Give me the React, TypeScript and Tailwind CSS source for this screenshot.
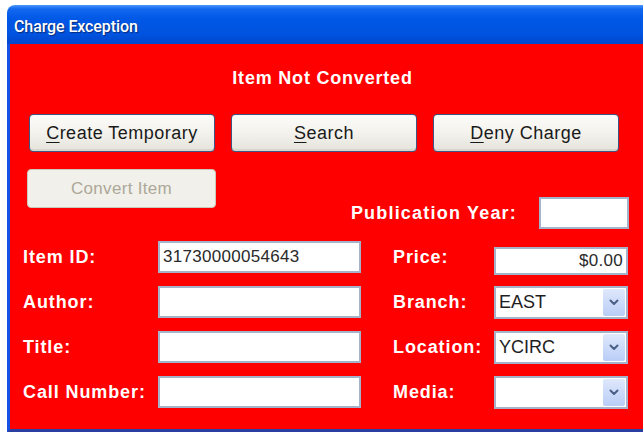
import type { ReactNode } from "react";

const sans = "font-['Liberation_Sans',Arial,sans-serif]";

function Chevron() {
  return (
    <svg width="10" height="7" viewBox="0 0 10 7" fill="none">
      <path d="M1.5 1.5 L5 5 L8.5 1.5" stroke="#4a5f86" strokeWidth="2" strokeLinecap="round" strokeLinejoin="round" />
    </svg>
  );
}

function XpButton({ children, className = "" }: { children: ReactNode; className?: string }) {
  return (
    <button
      className={`h-[38px] rounded-[4px] border border-[#3d5684] bg-gradient-to-b from-[#fcfcfa] via-[#f3f2ec] to-[#e4e3dc] text-[18px] tracking-[0.5px] text-[#1a1a1a] shadow-[inset_0_-2px_0_#d8d6cc] ${className}`}
    >
      {children}
    </button>
  );
}

function Label({ children, className = "" }: { children: ReactNode; className?: string }) {
  return <span className={`text-[18px] font-bold tracking-[0.9px] text-white ${className}`}>{children}</span>;
}

function TextBox({ value = "", align = "left", className = "" }: { value?: string; align?: "left" | "right"; className?: string }) {
  return (
    <div
      className={`flex items-center border-2 border-[#a4b3cb] bg-white px-[3px] text-[17px] tracking-[0.3px] text-[#2a2a2a] ${
        align === "right" ? "justify-end" : "justify-start"
      } ${className}`}
    >
      {value}
    </div>
  );
}

function Combo({ value = "" }: { value?: string }) {
  return (
    <div className="flex h-[33px] w-[134px] items-center border-2 border-[#a4b3cb] bg-white pl-[3px] pr-[1px]">
      <span className="flex-1 text-[18px] text-[#1e1e1e]">{value}</span>
      <span className="flex h-[27px] w-[22px] items-center justify-center rounded-[2px] bg-gradient-to-b from-[#dfe8fc] to-[#b9cdf6]">
        <Chevron />
      </span>
    </div>
  );
}

function FieldRow({ label, children, labelWidth }: { label: string; children: ReactNode; labelWidth: string }) {
  return (
    <div className="flex h-[32px] items-start">
      <div className={`flex h-[32px] items-center ${labelWidth}`}>
        <Label>{label}</Label>
      </div>
      {children}
    </div>
  );
}

export default function App() {
  return (
    <div className={`flex h-[432px] w-[643px] overflow-hidden bg-white pl-[7px] pt-[5px] ${sans}`}>
      <div className="flex flex-1 flex-col overflow-hidden rounded-tl-[8px]">
        {/* title bar */}
        <div className="flex h-[39px] items-center bg-[linear-gradient(180deg,#4a97fb_0%,#1468ef_10%,#0058e6_35%,#0053df_75%,#0046cc_100%)] pl-[7px] pt-[4px]">
          <span className="font-['Roboto',sans-serif] text-[16px] font-medium tracking-[-0.1px] text-white [text-shadow:1px_1px_1px_#0a2a7a]">
            Charge Exception
          </span>
        </div>

        {/* window body */}
        <div className="flex flex-1 flex-col border-b-[3px] border-l-[3px] border-b-[#2b3fa3] border-l-[#1551e2] bg-[#ff0000]">
          <div className="flex justify-center pr-[8px] pt-[23px]">
            <span className="text-[18px] font-bold leading-[22px] tracking-[0.8px] text-white">Item Not Converted</span>
          </div>

          <div className="mt-[25px] flex gap-[16px] pl-[19px]">
            <XpButton className="w-[186px]">
              <span className="underline underline-offset-[3px]">C</span>reate Temporary
            </XpButton>
            <XpButton className="w-[186px]">
              <span className="underline underline-offset-[3px]">S</span>earch
            </XpButton>
            <XpButton className="w-[186px]">
              <span className="underline underline-offset-[3px]">D</span>eny Charge
            </XpButton>
          </div>

          <div className="mt-[17px] flex h-[60px] items-start justify-between pl-[17px] pr-[14px]">
            <button className="h-[39px] w-[189px] rounded-[4px] border border-[#cbc8bb] bg-[#f1f0ea] text-[17px] tracking-[0.3px] text-[#aca899]">
              Convert Item
            </button>
            <div className="flex items-center gap-[22px] self-end">
              <Label className="tracking-[1.2px]">Publication Year:</Label>
              <TextBox className="h-[32px] w-[90px]" />
            </div>
          </div>

          <div className="mt-[12px] flex pl-[13px]">
            <div className="flex w-[370px] flex-col gap-[13px]">
              <FieldRow label="Item ID:" labelWidth="w-[135px]">
                <TextBox value="31730000054643" className="h-[32px] w-[203px]" />
              </FieldRow>
              <FieldRow label="Author:" labelWidth="w-[135px]">
                <TextBox className="h-[32px] w-[203px]" />
              </FieldRow>
              <FieldRow label="Title:" labelWidth="w-[135px]">
                <TextBox className="h-[32px] w-[203px]" />
              </FieldRow>
              <FieldRow label="Call Number:" labelWidth="w-[135px]">
                <TextBox className="h-[32px] w-[203px]" />
              </FieldRow>
            </div>
            <div className="flex flex-col gap-[13px]">
              <FieldRow label="Price:" labelWidth="w-[101px]">
                <TextBox value="$0.00" align="right" className="mt-[6px] h-[28px] w-[134px]" />
              </FieldRow>
              <FieldRow label="Branch:" labelWidth="w-[101px]">
                <Combo value="EAST" />
              </FieldRow>
              <FieldRow label="Location:" labelWidth="w-[101px]">
                <Combo value="YCIRC" />
              </FieldRow>
              <FieldRow label="Media:" labelWidth="w-[101px]">
                <Combo />
              </FieldRow>
            </div>
          </div>
        </div>
      </div>
    </div>
  );
}
